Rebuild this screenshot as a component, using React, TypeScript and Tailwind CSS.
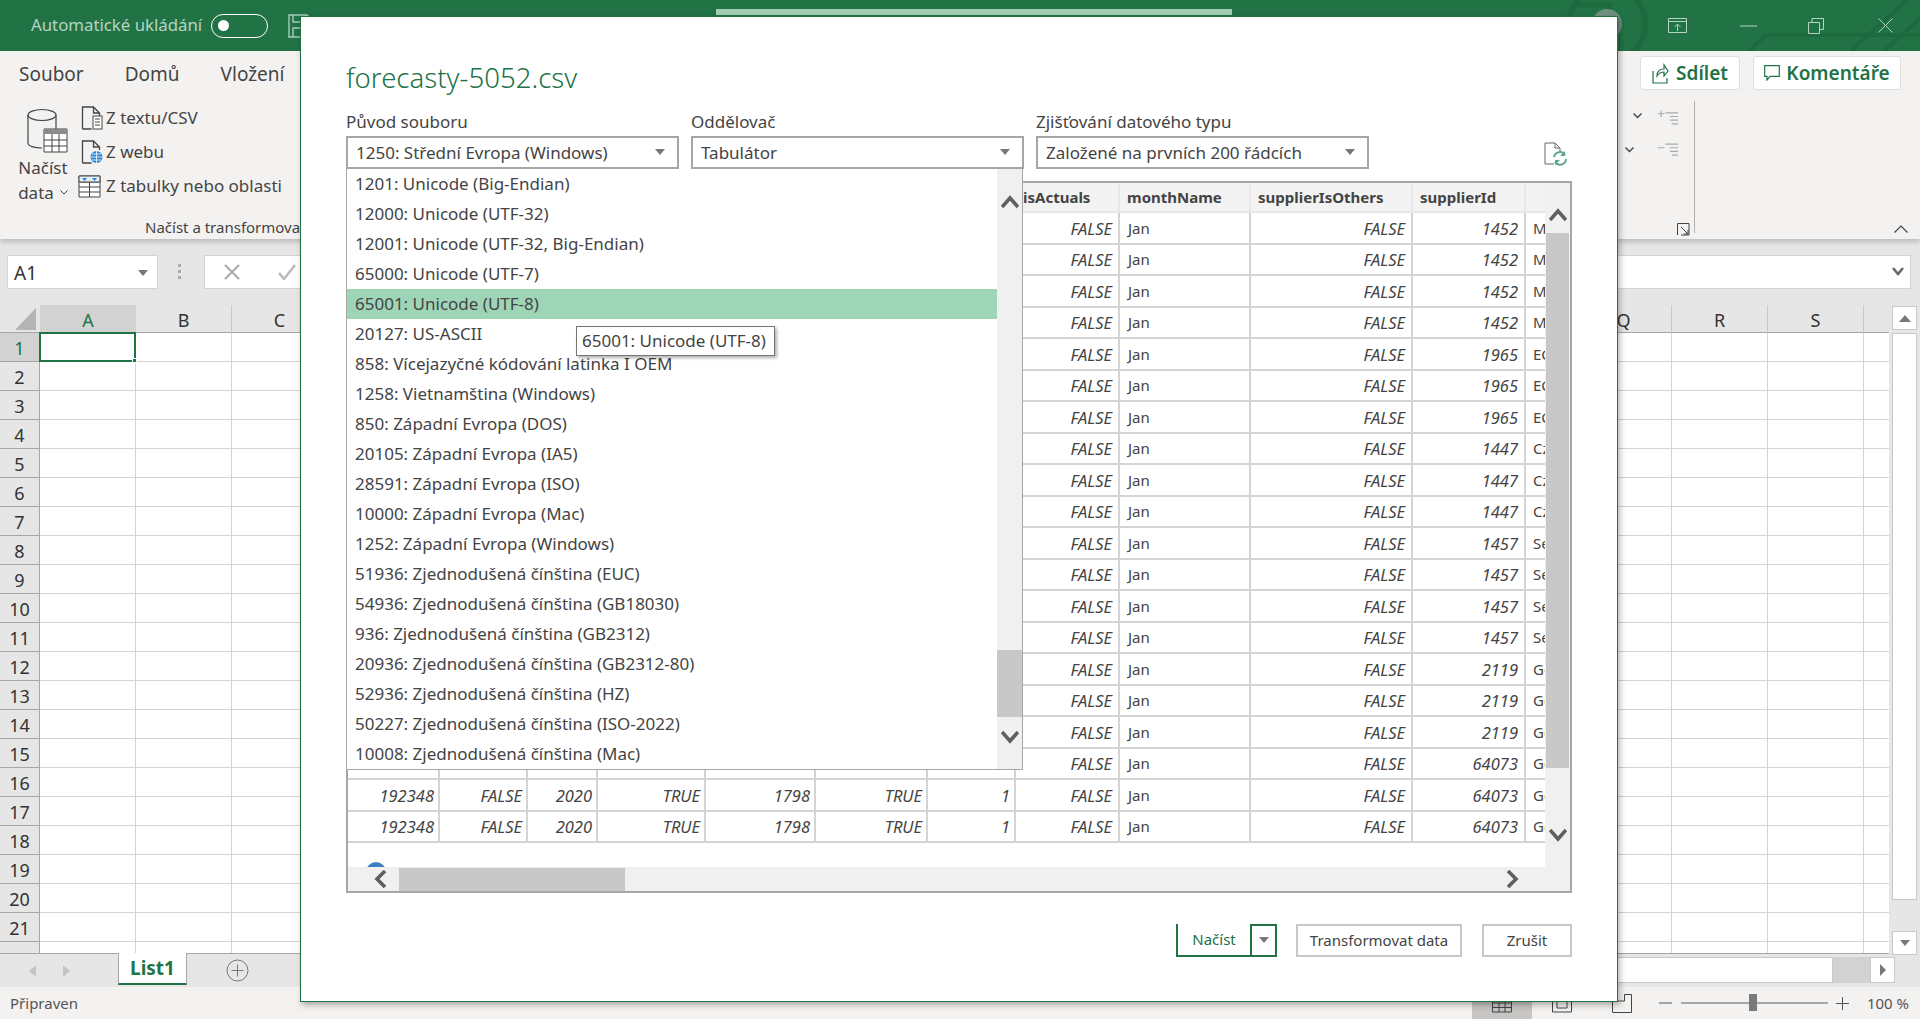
import React from 'react'

const encodings = [
  '1201: Unicode (Big-Endian)',
  '12000: Unicode (UTF-32)',
  '12001: Unicode (UTF-32, Big-Endian)',
  '65000: Unicode (UTF-7)',
  '65001: Unicode (UTF-8)',
  '20127: US-ASCII',
  '858: Vícejazyčné kódování latinka I OEM',
  '1258: Vietnamština (Windows)',
  '850: Západní Evropa (DOS)',
  '20105: Západní Evropa (IA5)',
  '28591: Západní Evropa (ISO)',
  '10000: Západní Evropa (Mac)',
  '1252: Západní Evropa (Windows)',
  '51936: Zjednodušená čínština (EUC)',
  '54936: Zjednodušená čínština (GB18030)',
  '936: Zjednodušená čínština (GB2312)',
  '20936: Zjednodušená čínština (GB2312-80)',
  '52936: Zjednodušená čínština (HZ)',
  '50227: Zjednodušená čínština (ISO-2022)',
  '10008: Zjednodušená čínština (Mac)',
]

// the first seven headers sit behind the open dropdown, the last one is blank in the picture
const headers = ['', '', '', '', '', '', '', 'isActuals', 'monthName', 'supplierIsOthers', 'supplierId', '']
const widths = 'grid-cols-[92px_88px_70px_108px_110px_112px_88px_104px_131px_162px_113px_100px]'
const suppliers: [string, string][] = [
  ...Array(4).fill(['1452', 'Mars']),
  ...Array(3).fill(['1965', 'ECO']),
  ...Array(3).fill(['1447', 'Czech']),
  ...Array(4).fill(['1457', 'Sea']),
  ...Array(3).fill(['2119', 'Gold']),
  ...Array(3).fill(['64073', 'Good']),
]
const colLetters = 'ABCDEFGHIJKLMNOPQRST'.split('')
const shownLetters = 'ABCQRS'

function Chev({ dir }: { dir: 'up' | 'down' | 'left' | 'right' }) {
  const vertical = dir === 'up' || dir === 'down'
  const d = { up: 'M1 12 9 3 17 12', down: 'M1 2 9 11 17 2', left: 'M11 1 3 9 11 17', right: 'M2 1 10 9 2 17' }[dir]
  return (
    <svg width={vertical ? 18 : 13} height={vertical ? 14 : 18} viewBox={vertical ? '0 0 18 14' : '0 0 13 18'} className="shrink-0">
      <path d={d} fill="none" stroke="#5f5f5f" strokeWidth="3.6" />
    </svg>
  )
}

function Caret({ color = '#777' }: { color?: string }) {
  return (
    <svg width="10" height="6" viewBox="0 0 10 6" className="shrink-0">
      <path d="M0 0h10L5 6z" fill={color} />
    </svg>
  )
}

function FileIcon({ kind }: { kind: 'text' | 'web' }) {
  return (
    <svg width="22" height="24" viewBox="0 0 22 24" className="shrink-0">
      <path d="M1.5 23V1h11l6 6v3M12.5 1v6h6M1.5 23h9" fill="none" stroke="#444" strokeWidth="1.3" />
      {kind === 'text' ? (
        <g>
          <rect x="12" y="10" width="9" height="13" fill="#fff" stroke="#444" />
          <path d="M14 13h5M14 16h5M14 19h5" stroke="#444" />
        </g>
      ) : (
        <g>
          <circle cx="15.5" cy="17" r="6" fill="#2b88d8" />
          <path d="M9.5 17h12M15.5 11v12M11 14h9M11 20h9" stroke="#fff" strokeWidth=".8" />
        </g>
      )}
    </svg>
  )
}

function TableIcon() {
  return (
    <svg width="23" height="23" viewBox="0 0 23 23" className="shrink-0">
      <path d="M1 1h21v21H1zM1 7h21M1 12h21M1 17h21M11.5 7v15" fill="#fff" stroke="#444" />
      <path d="M1 1h21v6H1z" fill="#e8eef2" stroke="#444" />
      <path d="M4 3h5L6.5 6zM14 3h5l-2.500 3z" fill="#2b88d8" />
    </svg>
  )
}

function TitleBar() {
  return (
    <div className="relative flex h-[51px] shrink-0 items-center overflow-hidden bg-[#217346] pl-[31px] pr-[27px]">
      <svg width="420" height="51" viewBox="0 0 420 51" className="absolute right-0 top-0">
        <circle cx="107" cy="24" r="38" fill="none" stroke="#1d6a3f" strokeWidth="6" />
        <path d="M76 5h34v34" fill="none" stroke="#1d6a3f" strokeWidth="5" />
        <circle cx="107" cy="24" r="15" fill="#6f8f80" />
        <path d="M249 51l17-16h154M351 51 407 0M384 51 420 18" fill="none" stroke="#1d6a3f" strokeWidth="4" />
      </svg>
      <span className="-mt-[2px] text-[16.8px] text-[#b5d4c2]">Automatické ukládání</span>
      <div className="ml-[9px] flex h-[24px] w-[57px] items-center rounded-full border border-white pl-[6px]">
        <div className="h-[11px] w-[11px] rounded-full bg-white" />
      </div>
      <svg width="24" height="24" viewBox="0 0 24 24" className="ml-[20px] shrink-0">
        <path d="M1 1h18l4 4v18H1zM5 1v7h12V1M5 23v-9h14v9" fill="none" stroke="#a6cdb8" strokeWidth="1.400" />
      </svg>
      <div className="ml-[404px] mt-[9px] h-[6px] w-[516px] self-start bg-[#a0ceb4]" />
      <div className="relative ml-auto flex items-center">
        <svg width="19" height="15" viewBox="0 0 19 15">
          <path d="M.5.5h18v14H.5zM.5 3.500h18M9.500 13V6.500M6.500 9l3-3 3 3" fill="none" stroke="#b5d4c2" />
        </svg>
        <svg width="17" height="2" viewBox="0 0 17 2" className="ml-[53px]">
          <path d="M0 1h17" stroke="#b5d4c2" />
        </svg>
        <svg width="16" height="16" viewBox="0 0 16 16" className="ml-[51px]">
          <path d="M.5 4.500h11v11H.5zM4 4.500V.5h11.500v11h-4" fill="none" stroke="#b5d4c2" />
        </svg>
        <svg width="15" height="15" viewBox="0 0 15 15" className="ml-[54px]">
          <path d="M.5.5l14 14M14.500.5l-14 14" stroke="#b5d4c2" />
        </svg>
      </div>
    </div>
  )
}

function Ribbon() {
  return (
    <div className="relative z-[1] flex h-[188px] shrink-0 bg-[#f3f2f1] text-[#444] shadow-[0_3px_5px_rgba(0,0,0,0.18)]">
      <div className="flex w-[300px] shrink-0 flex-col">
        <div className="flex h-[46px] items-center gap-[41px] pl-[19px] text-[19px]">
          <span>Soubor</span>
          <span>Domů</span>
          <span>Vložení</span>
        </div>
        <div className="flex pl-[14px] pt-[9px]">
          <div className="flex w-[58px] flex-col items-center text-[17px] leading-[25px]">
            <svg width="41" height="45" viewBox="0 0 41 45" className="ml-[8px] mt-[2px]">
              <path d="M1 7v28c0 3 6 5 14 5M29 7v14" fill="none" stroke="#444" strokeWidth="1.200" />
              <ellipse cx="15" cy="7" rx="14" ry="5.500" fill="none" stroke="#444" strokeWidth="1.200" />
              <path d="M17 21h23v23H17z" fill="#fff" stroke="#444" />
              <path d="M17 21h23v5H17z" fill="#8a8a8a" />
              <path d="M17 32h23M17 38h23M25 26v18M32 26v18" stroke="#444" />
            </svg>
            <span className="mt-[2px]">Načíst</span>
            <span className="flex items-center gap-[6px]">
              data
              <svg width="8" height="5" viewBox="0 0 8 5"><path d="M.5.5 4 4 7.500.5" fill="none" stroke="#444" /></svg>
            </span>
          </div>
          <div className="ml-[9px] flex flex-col gap-[10px] text-[17px] leading-[24px]">
            <div className="flex items-center gap-[3px]"><FileIcon kind="text" /><span>Z textu/CSV</span></div>
            <div className="flex items-center gap-[3px]"><FileIcon kind="web" /><span>Z webu</span></div>
            <div className="-ml-[3px] flex items-center gap-[5px]"><TableIcon /><span>Z tabulky nebo oblasti</span></div>
          </div>
        </div>
        <div className="mt-auto h-[22px] overflow-hidden whitespace-nowrap pl-[145px] text-[15px] leading-[20px]">Načíst a transformovat</div>
      </div>
      <div className="ml-auto flex h-full w-[307px] shrink-0">
        <div className="flex flex-col pl-[12px]">
          <div className="mt-[52px] flex h-[26px] items-center gap-[15px] pl-[8px]">
            <svg width="9" height="6" viewBox="0 0 9 6"><path d="M.5.5l4 4 4-4" fill="none" stroke="#444" strokeWidth="1.400" /></svg>
            <svg width="22" height="17" viewBox="0 0 24 18"><path d="M9 5h14M14 9h9M14 13h9M16 17h7M1 6h7M4.500 2.500v7" stroke="#aaa" strokeWidth="1.300" /></svg>
          </div>
          <div className="mt-[8px] flex h-[26px] items-center gap-[23px]">
            <svg width="9" height="6" viewBox="0 0 9 6"><path d="M.5.5l4 4 4-4" fill="none" stroke="#444" strokeWidth="1.400" /></svg>
            <svg width="22" height="17" viewBox="0 0 24 18"><path d="M9 2h14M14 6h9M14 10h9M16 14h7M1 6h7" stroke="#aaa" strokeWidth="1.300" /></svg>
          </div>
          <svg width="13" height="13" viewBox="0 0 13 13" className="ml-[52px] mt-[60px]">
            <path d="M.5 12V.5H12v11.500H4M4 4l7 7M7 11h4V7" fill="none" stroke="#444" />
          </svg>
        </div>
        <div className="ml-[4px] mt-[50px] h-[132px] w-[1px] bg-[#b3b0ad]" />
        <div className="-ml-[55px] flex flex-col">
          <div className="mt-[5px] flex gap-[13px]">
            <div className="flex h-[34px] w-[100px] items-center justify-center gap-[7px] rounded-[3px] border border-[#e1dfdd] bg-white text-[19px] font-semibold text-[#217346]">
              <svg width="17" height="21" viewBox="0 0 17 21"><path d="M1 8v12h14v-5M5 13c0-5 3-7 7-7V2l4 6-4 5V9c-3 0-5 1-7 4z" fill="none" stroke="#217346" strokeWidth="1.200" /></svg>
              Sdílet
            </div>
            <div className="flex h-[34px] w-[148px] items-center justify-center gap-[6px] rounded-[3px] border border-[#e1dfdd] bg-white text-[19px] font-semibold text-[#217346]">
              <svg width="16" height="16" viewBox="0 0 16 16"><path d="M.7.7h14.600v10.600H6L3 15v-3.700H.7z" fill="none" stroke="#217346" strokeWidth="1.200" /></svg>
              Komentáře
            </div>
          </div>
          <div className="-mr-[7px] mb-[6px] mt-auto flex justify-end">
            <svg width="14" height="8" viewBox="0 0 14 8"><path d="M.5 7.500 7 1l6.500 6.500" fill="none" stroke="#444" strokeWidth="1.200" /></svg>
          </div>
        </div>
      </div>
    </div>
  )
}

function FormulaBar() {
  return (
    <div className="flex h-[66px] shrink-0 bg-[#e6e6e6] pl-[7px] pt-[16px]">
      <div className="flex h-[34px] w-[151px] items-center border border-[#d4d4d4] bg-white pl-[6px] pr-[9px] pt-[2px] text-[19px] text-[#333]">
        A1
        <span className="ml-auto"><Caret /></span>
      </div>
      <div className="ml-[20px] mt-[9px] flex h-[15px] flex-col gap-[3px]">
        <div className="h-[3px] w-[3px] bg-[#aaa]" />
        <div className="h-[3px] w-[3px] bg-[#aaa]" />
        <div className="h-[3px] w-[3px] bg-[#aaa]" />
      </div>
      <div className="ml-[23px] flex h-[34px] w-[1707px] items-center border border-[#d4d4d4] bg-white pl-[19px] pr-[6px]">
        <svg width="16" height="16" viewBox="0 0 16 16"><path d="M1 1l14 14M15 1 1 15" stroke="#aaa" strokeWidth="2" /></svg>
        <svg width="18" height="16" viewBox="0 0 18 16" className="ml-[38px]"><path d="M1 9l5 6L17 1" fill="none" stroke="#bbb" strokeWidth="2.500" /></svg>
        <svg width="12" height="10" viewBox="0 0 12 10" className="ml-auto"><path d="M1 1l5 6 5-6" fill="none" stroke="#666" strokeWidth="2.500" /></svg>
      </div>
    </div>
  )
}

function Sheet() {
  const rows = Array.from({ length: 22 }, (_, i) => i + 1)
  return (
    <div className="flex h-[648px] shrink-0 bg-white text-[18px] text-[#333]">
      <div className="flex h-full w-[1889px] shrink-0 flex-col overflow-hidden">
        <div className="flex h-[28px] shrink-0 border-b border-[#a6a6a6] bg-[#e6e6e6]">
          <div className="flex h-[28px] w-[40px] shrink-0 items-end justify-end pb-[3px] pr-[4px]">
            <div className="h-0 w-0 border-b-[22px] border-l-[21px] border-b-[#b4b4b4] border-l-transparent" />
          </div>
          {colLetters.map(c => (
            <div key={c} className={c === 'A'
              ? 'flex h-[28px] w-[96px] shrink-0 items-center justify-center bg-[#d2d2d2] pt-[2px] text-[#217346]'
              : 'flex h-[28px] w-[96px] shrink-0 items-center justify-center border-r border-[#c8c8c8] pt-[2px]'}>
              {shownLetters.includes(c) ? c : ''}
            </div>
          ))}
        </div>
        {rows.map(r => (
          <div key={r} className="flex h-[29px] shrink-0">
            <div className={r === 1
              ? 'flex h-[29px] w-[40px] shrink-0 items-center justify-center border-b border-r border-[#a6a6a6] bg-[#d2d2d2] pt-[2px] text-[#217346]'
              : 'flex h-[29px] w-[40px] shrink-0 items-center justify-center border-b border-r border-[#a6a6a6] bg-[#e6e6e6] pt-[2px]'}>
              {r < 22 ? r : ''}
            </div>
            {colLetters.map(c => (
              <div key={c} className={r === 1 && c === 'A'
                ? 'relative -ml-[1px] -mt-[1px] h-[30px] w-[97px] shrink-0 border-2 border-[#217346]'
                : 'h-[29px] w-[96px] shrink-0 border-b border-r border-[#d4d4d4]'}>
                {r === 1 && c === 'A' && <div className="absolute -bottom-[3px] -right-[3px] h-[5px] w-[5px] border border-white bg-[#217346]" />}
              </div>
            ))}
          </div>
        ))}
      </div>
      <div className="relative z-[1] flex h-[650px] flex-1 flex-col bg-[#e6e6e6] pl-[3px] pr-[3px]">
        <div className="mt-[1px] flex h-[24px] shrink-0 items-center justify-center border border-[#c8c8c8] bg-white">
          <svg width="12" height="7" viewBox="0 0 12 7"><path d="M0 7h12L6 0z" fill="#777" /></svg>
        </div>
        <div className="mt-[3px] h-[567px] shrink-0 border border-[#c8c8c8] bg-white" />
        <div className="mt-auto flex h-[24px] shrink-0 items-center justify-center border border-[#c8c8c8] bg-white">
          <Caret />
        </div>
      </div>
    </div>
  )
}

function TabBar() {
  return (
    <div className="flex h-[34px] shrink-0 border-t border-[#a6a6a6] bg-[#e6e6e6]">
      <svg width="7" height="12" viewBox="0 0 7 12" className="ml-[29px] mt-[11px]"><path d="M7 0v12L0 6z" fill="#c4c4c4" /></svg>
      <svg width="7" height="12" viewBox="0 0 7 12" className="ml-[27px] mt-[11px]"><path d="M0 0v12l7-6z" fill="#c4c4c4" /></svg>
      <div className="relative -mt-[1px] ml-[48px] flex h-[32px] w-[69px] items-center justify-center border-x border-b-2 border-x-[#a6a6a6] border-b-[#217346] bg-white text-[19px] font-bold text-[#217346]">
        List1
      </div>
      <svg width="23" height="23" viewBox="0 0 23 23" className="ml-[39px] mt-[5px]">
        <circle cx="11.500" cy="11.500" r="10.500" fill="none" stroke="#777" />
        <path d="M11.500 5.500v12M5.500 11.500h12" stroke="#777" />
      </svg>
      <div className="ml-[1254px] mt-[3px] h-[26px] w-[330px] border border-[#c8c8c8] bg-white" />
      <div className="mt-[3px] h-[26px] w-[37px] bg-[#d2d2d2]" />
      <div className="mt-[3px] flex h-[26px] w-[25px] items-center justify-center border border-[#c8c8c8] bg-white">
        <svg width="6" height="12" viewBox="0 0 6 12"><path d="M0 0v12l6-6z" fill="#777" /></svg>
      </div>
    </div>
  )
}

function StatusBar() {
  return (
    <div className="flex h-[32px] shrink-0 items-center bg-[#f3f2f1] pl-[10px] pr-[11px] text-[15px] text-[#555]">
      <span>Připraven</span>
      <div className="ml-auto flex h-full w-[60px] items-center justify-center bg-[#c8c6c4]">
        <svg width="20" height="19" viewBox="0 0 20 19"><path d="M.5 1h19v17H.5zM.5 9h19M.5 13.500h19M7 5v13M13 5v13" fill="none" stroke="#444" /></svg>
      </div>
      <div className="flex h-full w-[60px] items-center justify-center">
        <svg width="20" height="19" viewBox="0 0 20 19"><path d="M.5 1h19v17H.5zM5 6h10v8H5z" fill="none" stroke="#444" /></svg>
      </div>
      <div className="flex h-full w-[60px] items-center justify-center">
        <svg width="20" height="19" viewBox="0 0 20 19"><path d="M.5 7h12V.5h7v18H.5z" fill="none" stroke="#444" /></svg>
      </div>
      <svg width="13" height="2" viewBox="0 0 13 2" className="ml-[7px]"><path d="M0 1h13" stroke="#555" /></svg>
      <div className="relative ml-[9px] h-[2px] w-[147px] bg-[#a6a6a6]">
        <div className="absolute left-[68px] top-[-8px] h-[17px] w-[8px] bg-[#7a7a7a]" />
      </div>
      <svg width="13" height="13" viewBox="0 0 13 13" className="ml-[8px]"><path d="M0 6.500h13M6.500 0v13" stroke="#555" /></svg>
      <span className="ml-[18px]">100 %</span>
    </div>
  )
}

function SelectBox({ value }: { value: string }) {
  return (
    <div className="flex h-[33px] w-[333px] items-center border-2 border-[#a6a6a6] bg-white pl-[8px] pr-[12px] pt-[1px] text-[17px]">
      <span>{value}</span>
      <span className="-mt-[3px] ml-auto"><Caret /></span>
    </div>
  )
}

function Dropdown() {
  return (
    <div className="absolute left-0 top-full z-10 flex h-[601px] w-[677px] border-x border-b border-[#a6a6a6] bg-white">
      <div className="relative flex w-[650px] shrink-0 flex-col">
        {encodings.map(e => (
          <div key={e} className={e.startsWith('65001')
            ? 'flex h-[30px] shrink-0 items-center bg-[#9fd5b7] pl-[8px] text-[17px]'
            : 'flex h-[30px] shrink-0 items-center pl-[8px] text-[17px]'}>
            {e}
          </div>
        ))}
        <div className="absolute left-[229px] top-[157px] flex h-[30px] w-[199px] items-center border border-[#767676] bg-white pl-[5px] text-[17px] shadow-[2px_2px_3px_rgba(0,0,0,0.3)]">
          65001: Unicode (UTF-8)
        </div>
      </div>
      <div className="flex flex-1 flex-col items-center bg-[#f0f0f0]">
        <div className="mt-[26px]"><Chev dir="up" /></div>
        <div className="mt-[441px] h-[67px] w-full shrink-0 bg-[#c8c8c8]" />
        <div className="mt-[13px]"><Chev dir="down" /></div>
      </div>
    </div>
  )
}

function Preview() {
  return (
    <div className="mt-[12px] flex h-[712px] w-[1226px] border-2 border-[#a6a6a6]">
      <div className="flex w-[1197px] shrink-0 flex-col">
        <div className="h-[684px] shrink-0 overflow-hidden">
          <div className={`grid w-[1278px] ${widths} h-[30px] bg-[#f3f3f3] pt-[1px] text-[15px] font-bold`}>
            {headers.map((h, i) => (
              <div key={i} className="flex items-center overflow-hidden whitespace-nowrap border-b-2 border-r-2 border-[#e6e6e6] pl-[7px]">{h}</div>
            ))}
          </div>
          {suppliers.map(([id, name], i) => {
            // rows above the 18th are covered by the dropdown up to isActuals
            const cells = i >= 17 ? ['192348', 'FALSE', '2020', 'TRUE', '1798', 'TRUE', '1'] : ['', '', '', '', '', '', '']
            return (
              <div key={i} className={`grid w-[1278px] ${widths} h-[31.5px] text-[15px]`}>
                {cells.map((c, j) => (
                  <div key={j} className="flex items-center justify-end border-b-2 border-r-2 border-[#d4d4d4] pr-[4px] pt-[3px] text-[16.5px] italic">{c}</div>
                ))}
                <div className="flex items-center justify-end border-b-2 border-r-2 border-[#d4d4d4] pr-[6px] pt-[3px] text-[16.5px] italic">FALSE</div>
                <div className="flex items-center border-b-2 border-r-2 border-[#d4d4d4] pl-[8px]">Jan</div>
                <div className="flex items-center justify-end border-b-2 border-r-2 border-[#d4d4d4] pr-[6px] pt-[3px] text-[16.5px] italic">FALSE</div>
                <div className="flex items-center justify-end border-b-2 border-r-2 border-[#d4d4d4] pr-[6px] pt-[3px] text-[16.5px] italic">{id}</div>
                <div className="flex items-center border-b-2 border-[#d4d4d4] pl-[7px]">{name}</div>
              </div>
            )
          })}
          <div className="flex h-[24px] items-end pl-[18px]">
            <svg width="20" height="5" viewBox="0 0 20 5"><circle cx="10" cy="10" r="10" fill="#3f7fbf" /></svg>
          </div>
        </div>
        <div className="flex h-[24px] items-center bg-[#f0f0f0] pl-[26px] pr-[26px]">
          <Chev dir="left" />
          <div className="ml-[12px] h-[23px] w-[226px] bg-[#c8c8c8]" />
          <div className="ml-auto"><Chev dir="right" /></div>
        </div>
      </div>
      <div className="flex flex-1 flex-col items-center bg-[#f0f0f0]">
        <div className="mt-[25px]"><Chev dir="up" /></div>
        <div className="mt-[11px] h-[535px] w-[23px] shrink-0 bg-[#c8c8c8]" />
        <div className="mt-[60px]"><Chev dir="down" /></div>
      </div>
    </div>
  )
}

function ImportDialog() {
  return (
    <div className="absolute left-[300px] top-[16px] z-20 flex h-[986px] w-[1318px] flex-col border border-[#217346] bg-white pl-[45px] text-[#444] shadow-[2px_3px_6px_rgba(0,0,0,0.3)]">
      <div className="mt-[11px] flex h-[16px] w-[1225px] shrink-0">
        <svg width="16" height="17" viewBox="0 0 16 17" className="ml-[1191px]"><path d="M.5.5h15v16H.5z" fill="none" stroke="#555" /></svg>
        <svg width="17" height="17" viewBox="0 0 17 17" className="ml-[32px]"><path d="M.5.5l16 16M16.500.5l-16 16" stroke="#555" /></svg>
      </div>
      <div className="mt-[14px] flex h-[40px] items-center text-[27.6px] font-light text-[#217346]">forecasty-5052.csv</div>
      <div className="mt-[12px] flex w-[1225px] gap-[12px] text-[17px]">
        <div className="relative flex flex-col gap-[2px]">
          <span className="h-[24px] leading-[24px]">Původ souboru</span>
          <SelectBox value="1250: Střední Evropa (Windows)" />
          <Dropdown />
        </div>
        <div className="flex flex-col gap-[2px]">
          <span className="h-[24px] leading-[24px]">Oddělovač</span>
          <SelectBox value="Tabulátor" />
        </div>
        <div className="flex flex-col gap-[2px]">
          <span className="h-[24px] leading-[24px]">Zjišťování datového typu</span>
          <SelectBox value="Založené na prvních 200 řádcích" />
        </div>
        <svg width="23" height="24" viewBox="0 0 23 24" className="ml-auto mr-[4px] mt-[32px]">
          <path d="M10 22H1V1h10l5 5v3M11 1v5h5" fill="none" stroke="#666" />
          <path d="M10 15a6 6 0 0 1 11-2M22 17a6 6 0 0 1-11 3" fill="none" stroke="#5fa98a" strokeWidth="2" />
          <path d="M21 9v5h-5zM11 23v-5h5z" fill="#5fa98a" />
        </svg>
      </div>
      <Preview />
      <div className="mt-[31px] flex h-[33px] w-[1226px] justify-end text-[15px]">
        <div className="flex h-[33px] w-[101px]">
          <div className="flex w-[74px] items-center justify-center border-b-2 border-l-2 border-[#217346] text-[#217346]">Načíst</div>
          <div className="flex w-[27px] items-center justify-center border-2 border-[#217346] pb-[2px]"><Caret /></div>
        </div>
        <div className="ml-[19px] flex w-[166px] items-center justify-center border-2 border-[#c8c8c8]">Transformovat data</div>
        <div className="ml-[20px] flex w-[90px] items-center justify-center border-2 border-[#c8c8c8]">Zrušit</div>
      </div>
    </div>
  )
}

export default function App() {
  return (
    <div className="relative flex h-[1019px] w-[1920px] flex-col overflow-hidden font-['Noto_Sans',sans-serif]">
      <TitleBar />
      <Ribbon />
      <FormulaBar />
      <Sheet />
      <TabBar />
      <StatusBar />
      <ImportDialog />
    </div>
  )
}
